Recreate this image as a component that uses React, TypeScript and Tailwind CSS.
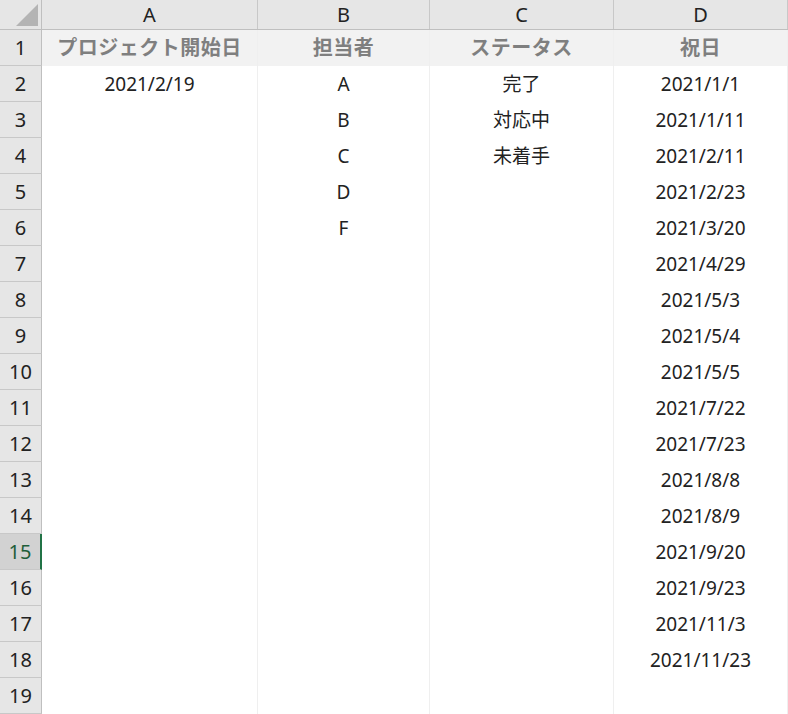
const cols = ['A', 'B', 'C', 'D']
const widths = ['w-[216px]', 'w-[172px]', 'w-[184px]', 'w-[174px]']

const rows: string[][] = [
  ['プロジェクト開始日', '担当者', 'ステータス', '祝日'],
  ['2021/2/19', 'A', '完了', '2021/1/1'],
  ['', 'B', '対応中', '2021/1/11'],
  ['', 'C', '未着手', '2021/2/11'],
  ['', 'D', '', '2021/2/23'],
  ['', 'F', '', '2021/3/20'],
  ['', '', '', '2021/4/29'],
  ['', '', '', '2021/5/3'],
  ['', '', '', '2021/5/4'],
  ['', '', '', '2021/5/5'],
  ['', '', '', '2021/7/22'],
  ['', '', '', '2021/7/23'],
  ['', '', '', '2021/8/8'],
  ['', '', '', '2021/8/9'],
  ['', '', '', '2021/9/20'],
  ['', '', '', '2021/9/23'],
  ['', '', '', '2021/11/3'],
  ['', '', '', '2021/11/23'],
  ['', '', '', ''],
]

export default function App() {
  return (
    <div
      className="w-[788px] h-[714px] overflow-hidden bg-white text-[19px] text-[#222]"
      style={{ fontFamily: '"Noto Sans", "Noto Sans CJK JP", sans-serif' }}
    >
      <div className="flex h-[30px] bg-[#e6e6e6] border-b border-[#bfbfbf] text-[20px]">
        <div className="w-[42px] shrink-0 border-r border-[#bfbfbf] flex items-end justify-end p-[3px]">
          <div className="w-0 h-0 border-l-[22px] border-l-transparent border-b-[22px] border-b-[#b4b4b4]" />
        </div>
        {cols.map((c, i) => (
          <div key={c} className={`${widths[i]} shrink-0 border-r border-[#c8c8c8] flex items-center justify-center`}>
            {c}
          </div>
        ))}
      </div>
      {rows.map((r, ri) => {
        const sel = ri === 14
        return (
          <div key={ri} className={`flex h-[36px] ${ri === 0 ? 'bg-[#f2f2f2]' : ''}`}>
            <div
              className={`w-[42px] shrink-0 flex items-center justify-center border-b border-[#c8c8c8] text-[20px] ${
                sel ? 'bg-[#d2d2d2] border-r-2 border-r-[#217346] text-[#1e5e3a]' : 'bg-[#e6e6e6] border-r border-r-[#bfbfbf]'
              }`}
            >
              {ri + 1}
            </div>
            {r.map((v, ci) => (
              <div
                key={ci}
                className={`${widths[ci]} shrink-0 border-r border-[#efefef] flex items-center justify-center ${
                  ri === 0 ? 'font-bold text-[#7f7f7f] text-[20px] tracking-[0.5px]' : ''
                }`}
              >
                {v}
              </div>
            ))}
          </div>
        )
      })}
    </div>
  )
}
